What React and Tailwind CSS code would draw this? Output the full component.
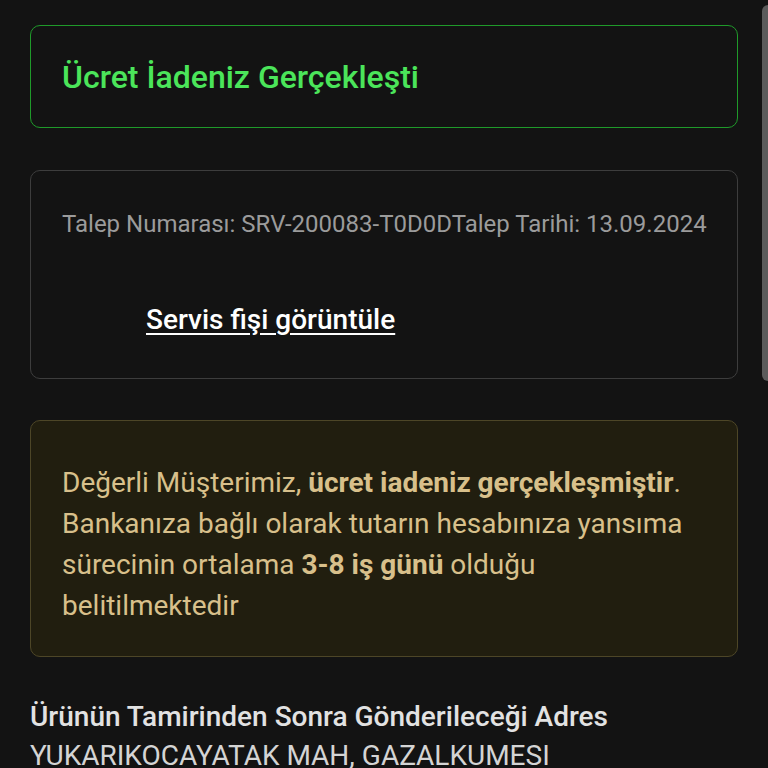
export default function App() {
  return (
    <div className="relative min-h-screen h-[768px] overflow-hidden bg-[#131313] font-['Roboto',sans-serif]">
      <div className="px-[30px] pt-[25px] flex flex-col">
        <div className="h-[103px] flex items-center px-[31px] rounded-[10px] border border-[#1f9a2a]">
          <h1 className="text-[32px] font-medium text-[#4be55a] leading-none">Ücret İadeniz Gerçekleşti</h1>
        </div>

        <div className="mt-[42px] h-[209px] rounded-[10px] border border-[#3d3d3d] px-[31px] pt-[38px]">
          <p className="text-[24px] leading-[30px] text-[#9b9b9b] whitespace-nowrap">
            Talep Numarası: SRV-200083-T0D0DTalep Tarihi: 13.09.2024
          </p>
          <a href="#" className="inline-block mt-[64px] ml-[84px] text-[28px] leading-[34px] font-medium text-white underline underline-offset-[4px]">
            Servis fişi görüntüle
          </a>
        </div>

        <div className="mt-[41px] rounded-[10px] border border-[#4d4627] bg-[#211e0f] pl-[31px] pr-[30px] pt-[41px] pb-[30px]">
          <p className="text-[28px] leading-[41px] text-[#d8c08b]">
            Değerli Müşterimiz, <b className="font-bold">ücret iadeniz gerçekleşmiştir</b>. Bankanıza bağlı olarak tutarın hesabınıza yansıma sürecinin ortalama <b className="font-bold">3-8 iş günü</b> olduğu belitilmektedir
          </p>
        </div>

        <div className="mt-[41px]">
          <h2 className="text-[28px] leading-[38px] font-medium text-[#e2e2e2]">Ürünün Tamirinden Sonra Gönderileceği Adres</h2>
          <p className="text-[28px] leading-[40px] text-[#d4d4d4]">YUKARIKOCAYATAK MAH, GAZALKUMESI</p>
        </div>
      </div>
      <div className="absolute right-0 top-[5px] w-[6px] h-[376px] rounded-l-full bg-[#5b5b5b]" />
    </div>
  );
}
